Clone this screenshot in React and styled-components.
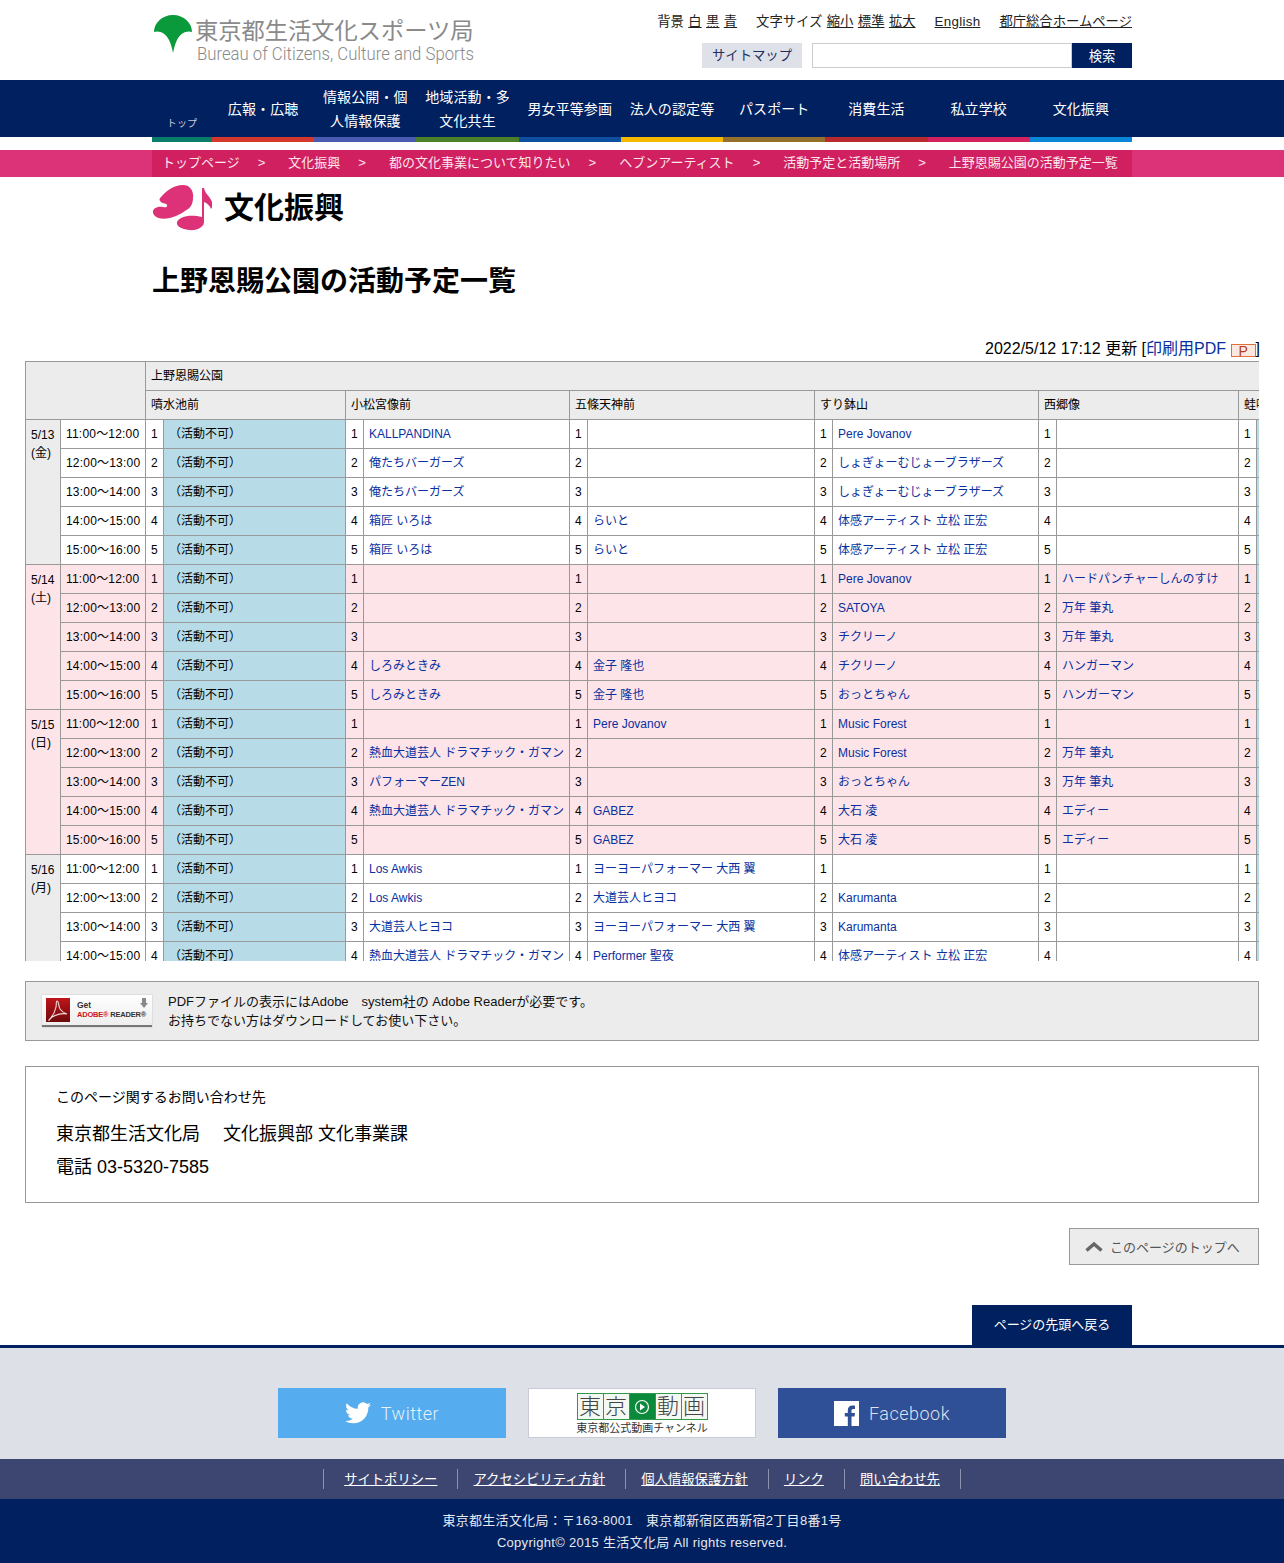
import React from 'react';
import styled, { createGlobalStyle } from 'styled-components';

const NAV = [
    { label: '広報・広聴', color: '#d4372c' },
    { label: '情報公開・個人情報保護', color: '#4a5bb0' },
    { label: '地域活動・多文化共生', color: '#4c7f2a' },
    { label: '男女平等参画', color: '#0f4fa0' },
    { label: '法人の認定等', color: '#f5b800' },
    { label: 'パスポート', color: '#94702c' },
    { label: '消費生活', color: '#b8292f' },
    { label: '私立学校', color: '#d3205f' },
    { label: '文化振興', color: '#0a86d8' },
];

const CRUMBS = ['トップページ', '文化振興', '都の文化事業について知りたい', 'ヘブンアーティスト', '活動予定と活動場所', '上野恩賜公園の活動予定一覧'];

const TIMES = ['11:00～12:00', '12:00～13:00', '13:00～14:00', '14:00～15:00', '15:00～16:00'];

const COLUMN_WIDTHS = [35, 85, 18, 182, 18, 206, 18, 227, 18, 206, 18, 182, 18, 200];

const GAMAN = '熱血大道芸人 ドラマチック・ガマン';
const TATEMATSU = '体感アーティスト 立松 正宏';
const SHOGYO = 'しょぎょーむじょーブラザーズ';
const ONISHI = 'ヨーヨーパフォーマー 大西 翼';

const DAYS = [
    {
        date: '5/13', week: '(金)', tone: 'weekday',
        spots: [
            ['KALLPANDINA', '俺たちバーガーズ', '俺たちバーガーズ', '箱匠 いろは', '箱匠 いろは'],
            ['', '', '', 'らいと', 'らいと'],
            ['Pere Jovanov', SHOGYO, SHOGYO, TATEMATSU, TATEMATSU],
            ['', '', '', '', ''],
        ],
    },
    {
        date: '5/14', week: '(土)', tone: 'holiday',
        spots: [
            ['', '', '', 'しろみときみ', 'しろみときみ'],
            ['', '', '', '金子 隆也', '金子 隆也'],
            ['Pere Jovanov', 'SATOYA', 'チクリーノ', 'チクリーノ', 'おっとちゃん'],
            ['ハードパンチャーしんのすけ', '万年 筆丸', '万年 筆丸', 'ハンガーマン', 'ハンガーマン'],
        ],
    },
    {
        date: '5/15', week: '(日)', tone: 'holiday',
        spots: [
            ['', GAMAN, 'パフォーマーZEN', GAMAN, ''],
            ['Pere Jovanov', '', '', 'GABEZ', 'GABEZ'],
            ['Music Forest', 'Music Forest', 'おっとちゃん', '大石 凌', '大石 凌'],
            ['', '万年 筆丸', '万年 筆丸', 'エディー', 'エディー'],
        ],
    },
    {
        date: '5/16', week: '(月)', tone: 'weekday',
        spots: [
            ['Los Awkis', 'Los Awkis', '大道芸人ヒヨコ', GAMAN, ''],
            [ONISHI, '大道芸人ヒヨコ', ONISHI, 'Performer 聖夜', ''],
            ['', 'Karumanta', 'Karumanta', TATEMATSU, ''],
            ['', '', '', '', ''],
        ],
    },
];

const FOOT_LINKS = ['サイトポリシー', 'アクセシビリティ方針', '個人情報保護方針', 'リンク', '問い合わせ先'];

const GinkgoLeaf = () => (
    <svg width="38" height="38" viewBox="0 0 38 38">
        <path fill="#0a9a3c" d="M19 0C8 0 0 8 0 17C5 15 12 18 15 25C17 29 18 33 19 38C20 33 21 29 23 25C26 18 33 15 38 17C38 8 30 0 19 0Z" />
    </svg>
);

const CultureIcon = () => (
    <svg width="60" height="46" viewBox="0 0 60 46">
        <path fill="#dd3277" d="M31 0C38 0 42 6 41 13C41 18 39 22 36 24C32 27 28 29 24 31C17 34 7 35 3 31C-1 27 1 23 6 22C11 21 14 24 15 21C16 18 11 19 9 17C7 15 7 14 9 12C15 5 22 0 31 0Z" />
        <path fill="#dd3277" d="M50 3L52 3C53 9 58 11 60 17C61 20 60 23 59 24C58 21 55 18 52 17L52 37C52 42 45 46 37 45C29 44 24 41 25 37C27 32 37 29 50 32Z" />
    </svg>
);

const AcrobatMark = () => (
    <svg width="20" height="21" viewBox="0 0 20 21">
        <path fill="none" stroke="#f4d8d8" strokeWidth="1.100" d="M1 20C4 17 7 12 8 7C8.500 4 8 1 9 1C11 1 10 5 12 9C14 12 16 13 19 14C15 13 8 14 3 18C1 20 0.500 21 1 20Z" />
    </svg>
);

const DownArrow = () => (
    <svg width="8" height="10" viewBox="0 0 8 10">
        <path fill="#8a8a8a" d="M2 0H6V5H8L4 10L0 5H2Z" />
    </svg>
);

const TwitterBird = () => (
    <svg width="26" height="22" viewBox="0 0 24 20">
        <path fill="#fff" d="M24 2.400a9.800 9.800 0 0 1-2.800.8 4.900 4.900 0 0 0 2.200-2.700 9.800 9.800 0 0 1-3.100 1.200A4.900 4.900 0 0 0 11.900 6.100 13.900 13.900 0 0 1 1.700.900a4.900 4.900 0 0 0 1.500 6.600 4.900 4.900 0 0 1-2.200-.6v.1a4.900 4.900 0 0 0 3.900 4.800 4.900 4.900 0 0 1-2.200.1 4.900 4.900 0 0 0 4.600 3.400A9.900 9.900 0 0 1 0 17.300 13.900 13.900 0 0 0 7.500 19.500c9.100 0 14-7.500 14-14v-.6A10 10 0 0 0 24 2.400Z" />
    </svg>
);

const FacebookMark = () => (
    <svg width="25" height="25" viewBox="0 0 25 25">
        <path fill="#fff" d="M0 0H25V25H17.500V15.500H20.500L21 12H17.500V9.800C17.500 8.700 17.900 8 19.300 8H21V4.800C20.500 4.700 19.500 4.600 18.400 4.600C15.700 4.600 13.800 6.200 13.800 9.300V12H10.800V15.500H13.800V25H0Z" />
    </svg>
);

const Chevron = () => (
    <svg width="18" height="11" viewBox="0 0 18 11">
        <path fill="none" stroke="#666" strokeWidth="3.500" d="M1.500 9.500L9 3L16.500 9.500" />
    </svg>
);

const PlayCircle = () => (
    <svg width="16" height="16" viewBox="0 0 16 16">
        <circle cx="8" cy="8" r="6.500" fill="none" stroke="#fff" strokeWidth="1.200" />
        <path fill="#fff" d="M6 4.500L11 8L6 11.500Z" />
    </svg>
);

const DayRows = ({ day }) =>
    TIMES.map((time, i) => (
        <tr key={time}>
            {i === 0 && (
                <DateCell rowSpan={5} $tone={day.tone}>
                    {day.date}
                    <br />
                    {day.week}
                </DateCell>
            )}
            <TimeCell $tone={day.tone}>{time}</TimeCell>
            <NumCell $tone={day.tone}>{i + 1}</NumCell>
            <BlockedCell>（活動不可）</BlockedCell>
            {day.spots.map((spot, s) => (
                <React.Fragment key={s}>
                    <NumCell $tone={day.tone}>{i + 1}</NumCell>
                    <NameCell $tone={day.tone}>{spot[i] && <ActLink href="#">{spot[i]}</ActLink>}</NameCell>
                </React.Fragment>
            ))}
            <NumCell $tone={day.tone}>{i + 1}</NumCell>
            <BlockedCell>（活動不可）</BlockedCell>
        </tr>
    ));

const App = () => {
    return (
        <>
            <GlobalStyle />
            <Header>
                <LogoLink href="#">
                    <GinkgoLeaf />
                    <LogoText>
                        <LogoJa>東京都生活文化スポーツ局</LogoJa>
                        <LogoEn>Bureau of Citizens, Culture and Sports</LogoEn>
                    </LogoText>
                </LogoLink>
                <Utility>
                    <UtilityRow>
                        <UtilityGroup>背景 <u>白</u> <u>黒</u> <u>青</u></UtilityGroup>
                        <UtilityGroup>文字サイズ <u>縮小</u> <u>標準</u> <u>拡大</u></UtilityGroup>
                        <EnglishLink>English</EnglishLink>
                        <UtilityGroup><u>都庁総合ホームページ</u></UtilityGroup>
                    </UtilityRow>
                    <SearchRow>
                        <SitemapLink href="#">サイトマップ</SitemapLink>
                        <SearchInput type="text" aria-label="検索" />
                        <SearchButton type="button">検索</SearchButton>
                    </SearchRow>
                </Utility>
            </Header>

            <NavBar>
                <NavInner>
                    <TopItem href="#" $color="#0a7d6a">トップ</TopItem>
                    {NAV.map((item) => (
                        <NavItem href="#" key={item.label} $color={item.color}>
                            <NavLabel>{item.label}</NavLabel>
                        </NavItem>
                    ))}
                </NavInner>
            </NavBar>

            <Breadcrumb>
                <CrumbInner>
                    {CRUMBS.map((crumb, i) => (
                        <React.Fragment key={crumb}>
                            {i > 0 && <CrumbSep>&gt;</CrumbSep>}
                            <span>{crumb}</span>
                        </React.Fragment>
                    ))}
                </CrumbInner>
            </Breadcrumb>

            <Narrow>
                <SectionTitle>
                    <CultureIcon />
                    <SectionName>文化振興</SectionName>
                </SectionTitle>
                <PageTitle>上野恩賜公園の活動予定一覧</PageTitle>
            </Narrow>

            <Wide>
                <Updated>
                    2022/5/12 17:12 更新 [<PdfLink href="#">印刷用PDF</PdfLink> <PdfBadge>P</PdfBadge>]
                </Updated>
                <TableClip>
                    <Schedule>
                        <colgroup>
                            {COLUMN_WIDTHS.map((w, i) => (
                                <Col key={i} $w={w} />
                            ))}
                        </colgroup>
                        <tbody>
                            <tr>
                                <HeadCell colSpan={2} rowSpan={2} />
                                <HeadCell colSpan={12}>上野恩賜公園</HeadCell>
                            </tr>
                            <tr>
                                <HeadCell colSpan={2}>噴水池前</HeadCell>
                                <HeadCell colSpan={2}>小松宮像前</HeadCell>
                                <HeadCell colSpan={2}>五條天神前</HeadCell>
                                <HeadCell colSpan={2}>すり鉢山</HeadCell>
                                <HeadCell colSpan={2}>西郷像</HeadCell>
                                <HeadCell colSpan={2}>蛙噴水</HeadCell>
                            </tr>
                            {DAYS.map((day) => (
                                <DayRows day={day} key={day.date} />
                            ))}
                        </tbody>
                    </Schedule>
                </TableClip>

                <ReaderBox>
                    <ReaderBadge href="#">
                        <ReaderMark><AcrobatMark /></ReaderMark>
                        <ReaderWords>
                            <span>Get</span>
                            <ReaderName><b>ADOBE®</b> READER®</ReaderName>
                        </ReaderWords>
                        <ReaderArrow><DownArrow /></ReaderArrow>
                    </ReaderBadge>
                    <ReaderNote>
                        PDFファイルの表示にはAdobe　system社の Adobe Readerが必要です。
                        <br />
                        お持ちでない方はダウンロードしてお使い下さい。
                    </ReaderNote>
                </ReaderBox>

                <ContactBox>
                    <ContactLead>このページ関するお問い合わせ先</ContactLead>
                    <ContactLine>東京都生活文化局　 文化振興部 文化事業課</ContactLine>
                    <ContactLine>電話 03-5320-7585</ContactLine>
                </ContactBox>

                <TopLinkRow>
                    <TopLink href="#">
                        <Chevron />
                        このページのトップへ
                    </TopLink>
                </TopLinkRow>
            </Wide>

            <BackRow>
                <BackLink href="#">ページの先頭へ戻る</BackLink>
            </BackRow>

            <Banners>
                <Banner href="#" $bg="#55acee">
                    <TwitterBird />
                    Twitter
                </Banner>
                <DougaBanner href="#">
                    <DougaTiles>
                        <DougaTile>東</DougaTile>
                        <DougaTile>京</DougaTile>
                        <DougaTile $filled><PlayCircle /></DougaTile>
                        <DougaTile>動</DougaTile>
                        <DougaTile>画</DougaTile>
                    </DougaTiles>
                    <DougaCaption>東京都公式動画チャンネル</DougaCaption>
                </DougaBanner>
                <Banner href="#" $bg="#2f4f96">
                    <FacebookMark />
                    Facebook
                </Banner>
            </Banners>

            <FootNav>
                {FOOT_LINKS.map((link) => (
                    <FootItem key={link}>
                        <FootLink href="#">{link}</FootLink>
                    </FootItem>
                ))}
            </FootNav>

            <Copy>
                <div>東京都生活文化局：〒163-8001　東京都新宿区西新宿2丁目8番1号</div>
                <div>Copyright© 2015 生活文化局 All rights reserved.</div>
            </Copy>
        </>
    );
};

export default App;


const toneBg = (tone) => (tone === 'holiday' ? '#fde4e8' : '#fff');

const GlobalStyle = createGlobalStyle`
    html, body {
        margin: 0;
        padding: 0;
        background: #fff;
        color: #000;
        font-family: "Liberation Sans", "Noto Sans CJK JP", sans-serif;
    }
    a {
        color: inherit;
    }
`;

const Header = styled.header`
    width: 980px;
    height: 80px;
    margin: 0 auto;
    display: flex;
    justify-content: space-between;
`;

const LogoLink = styled.a`
    display: flex;
    align-items: flex-start;
    gap: 3px;
    padding: 15px 0 0 2px;
    text-decoration: none;
`;

const LogoText = styled.div`
    display: flex;
    flex-direction: column;
    color: #8a8a8a;
`;

const LogoJa = styled.div`
    font-size: 23.25px;
    line-height: 32px;
    white-space: nowrap;
`;

const LogoEn = styled.div`
    font-family: Roboto, "Liberation Sans", sans-serif;
    font-weight: 300;
    font-size: 18px;
    line-height: 18px;
    margin: -2px 0 0 2px;
    transform: scaleX(0.93);
    transform-origin: left center;
    white-space: nowrap;
`;

const Utility = styled.div`
    display: flex;
    flex-direction: column;
    align-items: flex-end;
`;

const UtilityRow = styled.div`
    display: flex;
    gap: 19px;
    margin-top: 13px;
    font-size: 13.33px;
    line-height: 18px;
    word-spacing: 0.7px;
    color: #222;
`;

const UtilityGroup = styled.span`
    white-space: nowrap;
`;

const EnglishLink = styled.u`
    letter-spacing: 0.3px;
`;

const SearchRow = styled.div`
    display: flex;
    margin-top: 12px;
    height: 25px;
`;

const SitemapLink = styled.a`
    width: 100px;
    margin-right: 10px;
    background: #dfe1e8;
    color: #1d2f5e;
    font-size: 13.33px;
    line-height: 25px;
    text-align: center;
    text-decoration: none;
`;

const SearchInput = styled.input`
    width: 260px;
    box-sizing: border-box;
    border: 1px solid #ccc;
    padding: 0 4px;
    margin: 0;
    background: #fff;
`;

const SearchButton = styled.button`
    width: 60px;
    border: 0;
    padding: 0;
    background: #00205f;
    color: #fff;
    font-family: inherit;
    font-size: 13.33px;
`;

const NavBar = styled.nav`
    background: #00205f;
    height: 57px;
`;

const NavInner = styled.div`
    width: 980px;
    height: 62px;
    margin: 0 auto;
    display: grid;
    grid-template-columns: 60px repeat(9, 1fr);
`;

const NavItem = styled.a`
    display: flex;
    align-items: center;
    justify-content: center;
    height: 57px;
    border-bottom: 5px solid ${(p) => p.$color};
    color: #fff;
    font-size: 14px;
    line-height: 24px;
    letter-spacing: 0.1px;
    text-align: center;
    text-decoration: none;
`;

const NavLabel = styled.span`
    display: block;
    width: 90px;
`;

const TopItem = styled(NavItem)`
    align-items: flex-end;
    font-size: 10px;
    line-height: 14px;
    padding-bottom: 6px;
    box-sizing: content-box;
    height: 51px;
    color: #ccd;
`;

const Breadcrumb = styled.div`
    margin-top: 13px;
    background: #dc3278;
`;

const CrumbInner = styled.div`
    width: 980px;
    height: 27px;
    margin: 0 auto;
    box-sizing: border-box;
    padding: 0 0 2px 10px;
    display: flex;
    align-items: center;
    background: #d0205f;
    color: #fbe6ee;
    font-size: 13px;
    line-height: 16px;
    white-space: nowrap;
`;

const CrumbSep = styled.span`
    margin: 0 23px 0 18px;
`;

const Narrow = styled.div`
    width: 980px;
    margin: 0 auto;
`;

const SectionTitle = styled.div`
    display: flex;
    align-items: center;
    gap: 12px;
    height: 62px;
`;

const SectionName = styled.h2`
    margin: 0;
    font-size: 30px;
    line-height: 46px;
    font-weight: bold;
`;

const PageTitle = styled.h1`
    margin: 23px 0 0;
    font-size: 28px;
    line-height: 40px;
    font-weight: bold;
`;

const Wide = styled.div`
    padding: 0 25px;
`;

const Updated = styled.div`
    margin: 37px -1px 0 0;
    height: 22px;
    text-align: right;
    font-size: 16px;
    line-height: 20px;
    white-space: nowrap;
`;

const PdfLink = styled.a`
    color: #0a2f9e;
    text-decoration: none;
`;

const PdfBadge = styled.span`
    display: inline-block;
    box-sizing: border-box;
    width: 25px;
    height: 13px;
    vertical-align: -3px;
    border: 1px solid #e0703a;
    background: #fce8de;
    color: #b04020;
    font-size: 14px;
    line-height: 13px;
    text-align: center;
    overflow: hidden;
`;

const TableClip = styled.div`
    height: 600px;
    overflow: hidden;
`;

const Schedule = styled.table`
    width: 1431px;
    table-layout: fixed;
    border-collapse: collapse;
    font-size: 12px;
    line-height: 17px;
`;

const Col = styled.col`
    width: ${(p) => p.$w}px;
`;

const BaseCell = styled.td`
    box-sizing: border-box;
    height: 29px;
    padding: 0 5px;
    border: 1px solid #999;
    white-space: nowrap;
    overflow: hidden;
`;

const HeadCell = styled(BaseCell)`
    background: #ececec;
`;

const DateCell = styled(BaseCell)`
    vertical-align: top;
    padding-top: 6px;
    line-height: 18px;
    background: ${(p) => (p.$tone === 'holiday' ? '#fde4e8' : '#ececec')};
`;

const TimeCell = styled(BaseCell)`
    letter-spacing: 0.2px;
    background: ${(p) => toneBg(p.$tone)};
`;

const NumCell = styled(BaseCell)`
    background: ${(p) => toneBg(p.$tone)};
`;

const NameCell = styled(BaseCell)`
    background: ${(p) => toneBg(p.$tone)};
`;

const BlockedCell = styled(BaseCell)`
    background: #b7dce8;
`;

const ActLink = styled.a`
    color: #0a2f9e;
    text-decoration: none;
`;

const ReaderBox = styled.div`
    box-sizing: border-box;
    height: 60px;
    margin-top: 20px;
    border: 1px solid #999;
    background: #ececec;
    display: flex;
    align-items: center;
    padding-left: 16px;
    gap: 16px;
`;

const ReaderBadge = styled.a`
    position: relative;
    box-sizing: border-box;
    width: 110px;
    height: 32px;
    padding-left: 4px;
    display: flex;
    align-items: center;
    background: linear-gradient(#fff, #eee);
    border-bottom: 2px solid #777;
    box-shadow: 0 0 1px #999;
    text-decoration: none;
`;

const ReaderMark = styled.span`
    width: 24px;
    height: 24px;
    flex: none;
    display: flex;
    align-items: center;
    justify-content: center;
    background: linear-gradient(#c0141a, #6d0a0c);
`;

const ReaderWords = styled.span`
    display: flex;
    flex-direction: column;
    margin-left: 7px;
    font-size: 8.500px;
    font-weight: bold;
    line-height: 9px;
    color: #333;
`;

const ReaderName = styled.span`
    font-size: 7.500px;
    font-weight: bold;
    letter-spacing: -0.2px;
    white-space: nowrap;
    b {
        color: #d0141a;
    }
`;

const ReaderArrow = styled.span`
    position: absolute;
    top: 3px;
    right: 4px;
    line-height: 0;
`;

const ReaderNote = styled.div`
    font-size: 13px;
    line-height: 19px;
    color: #111;
`;

const ContactBox = styled.div`
    box-sizing: border-box;
    height: 137px;
    margin-top: 25px;
    border: 1px solid #999;
    padding: 20px 30px;
`;

const ContactLead = styled.div`
    font-size: 14px;
    line-height: 21px;
    margin-bottom: 10px;
`;

const ContactLine = styled.div`
    font-size: 18px;
    line-height: 33px;
`;

const TopLinkRow = styled.div`
    display: flex;
    justify-content: flex-end;
    margin-top: 25px;
`;

const TopLink = styled.a`
    box-sizing: border-box;
    width: 190px;
    height: 37px;
    display: flex;
    align-items: center;
    gap: 7px;
    padding-left: 15px;
    border: 1px solid #999;
    background: #ececec;
    color: #555;
    font-size: 13px;
    text-decoration: none;
`;

const BackRow = styled.div`
    width: 980px;
    margin: 40px auto 0;
    display: flex;
    justify-content: flex-end;
`;

const BackLink = styled.a`
    width: 160px;
    height: 40px;
    background: #00205f;
    color: #fff;
    font-size: 13px;
    line-height: 40px;
    text-align: center;
    text-decoration: none;
`;

const Banners = styled.div`
    box-sizing: border-box;
    height: 114px;
    padding-top: 40px;
    border-top: 3px solid #00205f;
    background: #dee0e7;
    display: flex;
    justify-content: center;
    gap: 22px;
`;

const Banner = styled.a`
    box-sizing: border-box;
    width: 228px;
    height: 50px;
    display: flex;
    align-items: center;
    justify-content: center;
    gap: 10px;
    background: ${(p) => p.$bg};
    color: rgba(255, 255, 255, 0.85);
    font-family: Roboto, "Liberation Sans", sans-serif;
    font-size: 18px;
    font-weight: 300;
    letter-spacing: 0.5px;
    text-decoration: none;
`;

const DougaBanner = styled.a`
    box-sizing: border-box;
    width: 228px;
    height: 50px;
    display: flex;
    flex-direction: column;
    align-items: center;
    padding-top: 4px;
    background: #fff;
    border: 1px solid #c9ccd4;
    color: #333;
    text-decoration: none;
`;

const DougaTiles = styled.div`
    display: flex;
    height: 27px;
    width: 131px;
    border: 1px solid #2f9a4c;
    box-sizing: border-box;
`;

const DougaTile = styled.span`
    flex: 1;
    display: flex;
    align-items: center;
    justify-content: center;
    font-size: 22px;
    font-weight: 300;
    line-height: 24px;
    color: #444;
    background: ${(p) => (p.$filled ? '#0a8a3a' : '#f3f8f3')};
    border-right: 1px solid #2f9a4c;
    &:last-child {
        border-right: 0;
    }
`;

const DougaCaption = styled.div`
    margin-top: 1px;
    font-size: 11px;
    line-height: 14px;
    white-space: nowrap;
`;

const FootNav = styled.ul`
    margin: 0;
    padding: 0;
    height: 40px;
    list-style: none;
    background: #3d4670;
    display: flex;
    justify-content: center;
    align-items: center;
`;

const FootItem = styled.li`
    height: 20px;
    padding: 0 20px 0 15px;
    border-left: 1px solid #8e93ad;
    line-height: 20px;
    &:first-child {
        padding-left: 20px;
    }
    &:last-child {
        border-right: 1px solid #8e93ad;
    }
`;

const FootLink = styled.a`
    color: #fff;
    font-size: 13.33px;
    white-space: nowrap;
`;

const Copy = styled.footer`
    height: 64px;
    box-sizing: border-box;
    padding-top: 11px;
    background: #00205f;
    color: #e6e8f0;
    font-size: 13px;
    line-height: 22px;
    letter-spacing: 0.3px;
    text-align: center;
`;
